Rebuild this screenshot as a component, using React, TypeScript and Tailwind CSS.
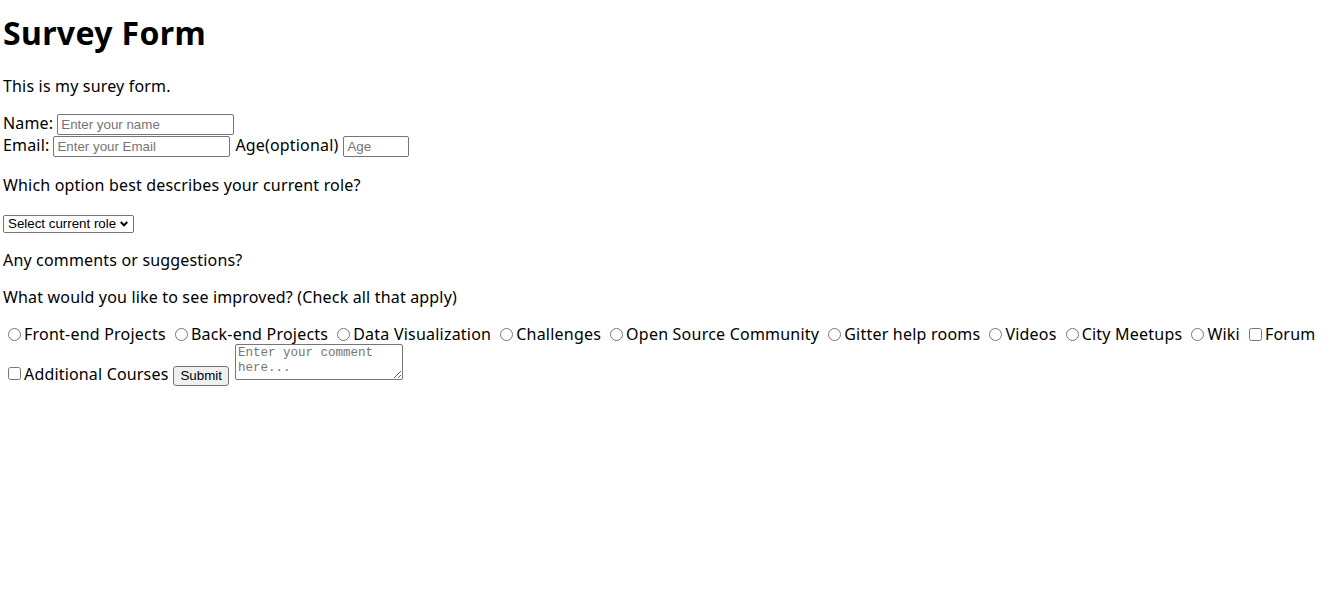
import React from "react";

const improvements = [
  { label: "Front-end Projects", type: "radio" },
  { label: "Back-end Projects", type: "radio" },
  { label: "Data Visualization", type: "radio" },
  { label: "Challenges", type: "radio" },
  { label: "Open Source Community", type: "radio" },
  { label: "Gitter help rooms", type: "radio" },
  { label: "Videos", type: "radio" },
  { label: "City Meetups", type: "radio" },
  { label: "Wiki", type: "radio" },
  { label: "Forum", type: "checkbox" },
];

const inputCls =
  "h-[21px] border border-[#767676] rounded-[2px] bg-white px-[3px] text-[13.33px] tracking-normal font-['Liberation_Sans',Arial,sans-serif] text-black placeholder:text-[#757575] outline-none";

const Option = ({ label, type }: { label: string; type: string }) => (
  <label className="flex items-end mr-[4px] shrink-0">
    <input
      type={type}
      name={type === "radio" ? "improve" : label}
      value={label}
      className="w-[13px] h-[13px] ml-[5px] mr-[3px] mb-[3px] shrink-0"
    />
    <span className="leading-[20px] tracking-[0.22px]">{label}</span>
  </label>
);

export default function App() {
  return (
    <div className="min-h-[589px] bg-white px-[3px] pt-[13px] text-black text-[16px] tracking-[0.17px] font-['Noto_Sans',sans-serif]">
      <h1 className="text-[32px] font-bold leading-[40px] tracking-[0.35px]">Survey Form</h1>
      <p className="mt-[22.5px] leading-[20px]">This is my surey form.</p>

      <form onSubmit={(e) => e.preventDefault()}>
        <div className="mt-[17px] flex items-baseline gap-[4px]">
          <label htmlFor="name" className="leading-[20px]">Name:</label>
          <input id="name" type="text" placeholder="Enter your name" className={`${inputCls} w-[177px]`} />
        </div>
        <div className="flex items-baseline gap-[4px]">
          <label htmlFor="email" className="leading-[20px]">Email:</label>
          <input id="email" type="email" placeholder="Enter your Email" className={`${inputCls} w-[177px]`} />
          <label htmlFor="age" className="ml-[1px] leading-[20px]">Age(optional)</label>
          <input id="age" type="number" placeholder="Age" className={`${inputCls} ml-[1px] w-[66px]`} />
        </div>

        <p className="mt-[18px] leading-[20px]">Which option best describes your current role?</p>

        <div className="relative mt-[20px] w-[131px]">
          <select
            defaultValue=""
            className="block appearance-none h-[18px] w-[131px] border border-[#767676] rounded-[2px] bg-white pl-[4px] pr-[16px] text-[13.33px] leading-[16px] tracking-normal font-['Liberation_Sans',Arial,sans-serif] text-black outline-none"
          >
            <option value="" disabled>Select current role</option>
            <option value="student">Student</option>
            <option value="job">Full Time Job</option>
            <option value="learner">Full Time Learner</option>
            <option value="other">Other</option>
          </select>
          <svg
            className="pointer-events-none absolute right-[6px] top-[6px]"
            width="8"
            height="6"
            viewBox="0 0 8 6"
          >
            <path d="M0.8 1 L4 4.4 L7.2 1" fill="none" stroke="#000" strokeWidth="2" />
          </svg>
        </div>

        <p className="mt-[17px] leading-[20px]">Any comments or suggestions?</p>
        <p className="mt-[17.5px] leading-[20px]">What would you like to see improved? (Check all that apply)</p>

        <div className="mt-[16.5px] flex items-end whitespace-nowrap">
          {improvements.map((item) => (
            <Option key={item.label} label={item.label} type={item.type} />
          ))}
        </div>

        <div className="flex items-start">
          <input
            type="checkbox"
            name="courses"
            className="mt-[23.5px] w-[13px] h-[13px] ml-[5px] mr-[3px] shrink-0"
          />
          <span className="mt-[20px] leading-[20px]">Additional Courses</span>
          <button
            type="submit"
            className="mt-[22px] ml-[5px] h-[20px] px-[6px] border border-[#767676] rounded-[3px] bg-[#efefef] text-[13.33px] leading-[16px] tracking-normal font-['Liberation_Sans',Arial,sans-serif] text-black"
          >
            Submit
          </button>
          <textarea
            placeholder="Enter your comment here..."
            className="mt-[0.5px] ml-[6px] h-[36px] w-[168px] resize border border-[#767676] rounded-[2px] bg-white px-[2px] pt-[1px] text-[12.5px] leading-[15px] tracking-normal font-['Liberation_Mono',monospace] text-black placeholder:text-[#757575] outline-none"
          />
        </div>
      </form>
    </div>
  );
}
